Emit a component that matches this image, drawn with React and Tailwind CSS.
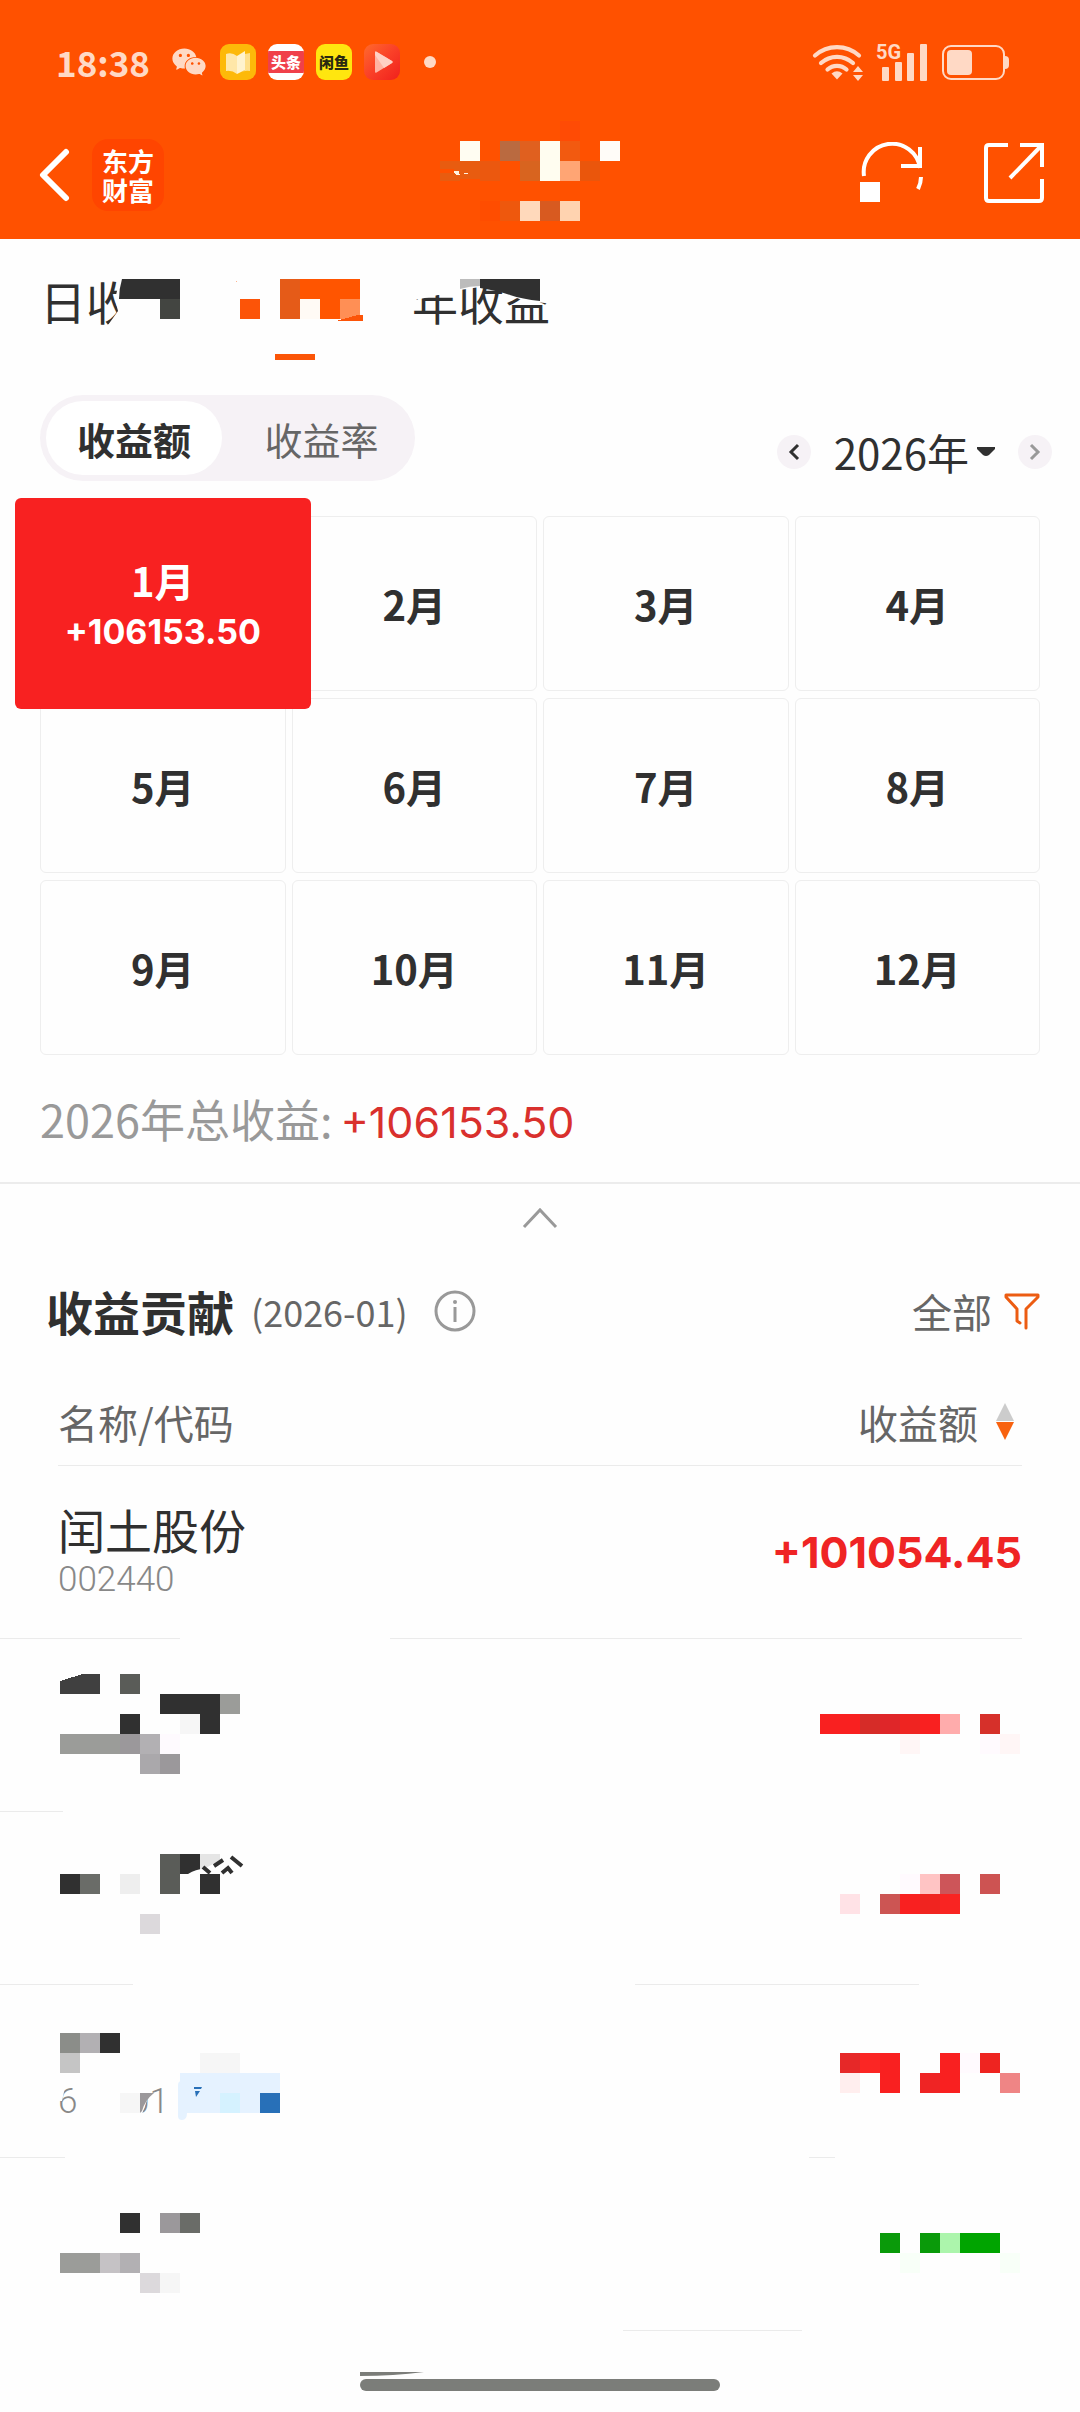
import { useState } from "react";
import { AiFillWechat } from "react-icons/ai";

const MONTHS = [1, 2, 3, 4, 5, 6, 7, 8, 9, 10, 11, 12];
const YEAR_TOTAL = "+106153.50";

/* ---------------- Masked blocks: [x, y, width, height, colour] ---------------- */
const TITLE_BLOCKS = [
  [120, 0, 20, 20, "#ff4b05"],
  [20, 20, 20, 20, "#fffdf2"],
  [60, 20, 20, 20, "#ba6a40"],
  [80, 20, 20, 20, "#e0601f"],
  [100, 20, 20, 40, "#fffdf0"],
  [120, 20, 20, 20, "#f25a10"],
  [160, 20, 20, 20, "#fffcf8"],
  [0, 40, 20, 8, "#e85c10"],
  [0, 52, 20, 8, "#e85c10"],
  [14, 40, 26, 18, "#e85c10"],
  [40, 40, 20, 20, "#eb580f"],
  [80, 40, 20, 20, "#d8641f"],
  [120, 40, 20, 20, "#ffa574"],
  [140, 40, 20, 20, "#ea560c"],
  [40, 80, 20, 20, "#ff4d00"],
  [60, 80, 20, 20, "#ee580d"],
  [80, 80, 20, 20, "#ffd9bb"],
  [100, 80, 20, 20, "#d85a20"],
  [120, 80, 20, 20, "#ffd3b0"],
];

const HOLDINGS = [
  {
    id: "b",
    rule: [[0, 63]],
    name: [
      [62, 35, 20, 20, "#5a5c58"],
      [102, 55, 60, 20, "#303030"],
      [162, 55, 20, 20, "#9b9c99"],
      [62, 75, 20, 20, "#303030"],
      [122, 75, 20, 20, "#f6f6f6"],
      [142, 75, 20, 20, "#303030"],
      [2, 95, 60, 20, "#9b9c99"],
      [62, 95, 20, 20, "#9b989b"],
      [82, 95, 20, 20, "#b2b0b3"],
      [102, 95, 20, 20, "#fefafe"],
      [82, 115, 20, 20, "#aaa8ab"],
      [102, 115, 20, 20, "#9b989b"],
    ],
    amount: [
      [0, 75, 40, 20, "#f92020"],
      [40, 75, 20, 20, "#d62c28"],
      [60, 75, 20, 20, "#df2629"],
      [80, 75, 20, 20, "#ef2421"],
      [100, 75, 20, 20, "#f92020"],
      [120, 75, 20, 20, "#ffacac"],
      [160, 75, 20, 20, "#d6302a"],
      [80, 95, 20, 20, "#fff6f6"],
      [160, 95, 20, 20, "#fffafe"],
      [180, 95, 20, 20, "#fff6f6"],
    ],
  },
  {
    id: "c",
    rule: [[0, 133], [635, 919]],
    name: [
      [2, 62, 20, 20, "#303030"],
      [22, 62, 20, 20, "#6a6c68"],
      [62, 62, 20, 20, "#eeeeee"],
      [102, 42, 20, 40, "#5a5c58"],
      [122, 42, 20, 20, "#303030"],
      [142, 42, 20, 20, "#e5e5e5"],
      [82, 102, 20, 20, "#dcd9dc"],
    ],
    amount: [
      [80, 62, 20, 20, "#fffafe"],
      [100, 62, 20, 20, "#ffc4c4"],
      [120, 62, 20, 20, "#cd5559"],
      [160, 62, 20, 20, "#cd5352"],
      [20, 82, 20, 20, "#ffe2e6"],
      [60, 82, 20, 20, "#cc5553"],
      [80, 82, 20, 20, "#f92020"],
      [100, 82, 20, 20, "#f02420"],
      [120, 82, 20, 20, "#f92422"],
    ],
  },
  {
    id: "d",
    rule: [[0, 65], [809, 835]],
    name: [
      [2, 48, 20, 20, "#8b8d89"],
      [22, 48, 20, 20, "#b2b0b3"],
      [42, 48, 20, 20, "#303030"],
      [2, 68, 20, 20, "#c5c5c5"],
      [142, 68, 40, 20, "#f6f6f6"],
      [122, 88, 100, 40, "#e5f2ff"],
      [162, 108, 20, 20, "#d5f2ff"],
      [202, 108, 20, 20, "#2870b8"],
    ],
    amount: [
      [20, 68, 20, 20, "#e62828"],
      [40, 68, 20, 20, "#fb2624"],
      [60, 68, 20, 40, "#f92020"],
      [120, 68, 20, 40, "#f92020"],
      [140, 68, 20, 20, "#fffafe"],
      [160, 68, 20, 20, "#ee2420"],
      [20, 88, 20, 20, "#ffeeee"],
      [100, 88, 20, 20, "#ef2424"],
      [180, 88, 20, 20, "#ef8585"],
    ],
  },
  {
    id: "e",
    rule: [[623, 802]],
    name: [
      [62, 55, 20, 20, "#303030"],
      [102, 55, 20, 20, "#9b989b"],
      [122, 55, 20, 20, "#6a6c68"],
      [2, 95, 40, 20, "#9b9c99"],
      [42, 95, 20, 20, "#c5c2c5"],
      [62, 95, 20, 20, "#b2b0b3"],
      [82, 115, 20, 20, "#dcd9dc"],
      [102, 115, 20, 20, "#f6f6f6"],
    ],
    amount: [
      [60, 75, 20, 20, "#0a9a0a"],
      [100, 75, 20, 20, "#0a9a0a"],
      [120, 75, 20, 20, "#acf5ac"],
      [140, 75, 40, 20, "#00a400"],
      [80, 95, 20, 20, "#f8fff8"],
      [180, 95, 20, 20, "#f8fff8"],
    ],
  },
];

function Blocks({ blocks, width, height, className, children }) {
  return (
    <svg
      width={width}
      height={height}
      viewBox={`0 0 ${width} ${height}`}
      shapeRendering="crispEdges"
      aria-hidden="true"
      className={className}
    >
      {blocks.map(([x, y, w, h, fill]) => (
        <rect key={`${x}-${y}`} x={x} y={y} width={w} height={h} fill={fill} />
      ))}
      {children}
    </svg>
  );
}

/* Hairline under a table row, made of one or more [from, to] segments out of 1080 */
function RuleRow({ segments }) {
  const parts = [];
  let at = 0;
  segments.forEach(([from, to]) => {
    if (from > at) parts.push({ key: `gap-${at}`, width: from - at, line: false });
    parts.push({ key: `line-${from}`, width: to - from, line: true });
    at = to;
  });

  return (
    <tr aria-hidden="true">
      <td colSpan={2} className="p-0">
        <div className="flex h-px w-full">
          {parts.map((p) => (
            <span
              key={p.key}
              className={p.line ? "h-px bg-[#ebebeb]" : "h-px"}
              style={{ width: `${(p.width / 1080) * 100}%` }}
            />
          ))}
        </div>
      </td>
    </tr>
  );
}

/* ---------------- Status bar ---------------- */
function StatusBar() {
  return (
    <div className="flex h-[82px] items-end justify-between pr-[70px] pl-14 text-[#ffd9c5]">
      <div className="flex h-10 items-center gap-3">
        <span className="mr-2 font-['Noto_Sans_CJK_SC',sans-serif] text-[35px] leading-10 font-bold">
          18:38
        </span>
        <AiFillWechat size={38} />
        <svg width="36" height="36" viewBox="0 0 36 36">
          <rect width="36" height="36" rx="9" fill="#fdb909" />
          <path d="M6 10q6-2 11 2v18q-5-4-11-3z" fill="#ffe7a8" />
          <path d="M17 12l8-5v19l-8 4z" fill="#fff3cf" />
          <path d="M25 10l5-1v18q-7-1-13 3l8-4z" fill="#ffdf8a" />
        </svg>
        <span className="flex h-9 w-9 items-center overflow-hidden rounded-[9px] bg-white">
          <span className="w-full bg-[#f0404a] text-center font-['Noto_Sans_CJK_SC',sans-serif] text-[15px] leading-[22px] font-black text-white">
            头条
          </span>
        </span>
        <span className="flex h-9 w-9 items-center justify-center rounded-[9px] bg-[#ffe60f] font-['Noto_Sans_CJK_SC',sans-serif] text-[15px] leading-5 font-black text-[#2a2a10]">
          闲鱼
        </span>
        <svg width="36" height="36" viewBox="0 0 36 36">
          <defs>
            <linearGradient id="play-bg" x1="0" y1="0" x2="1" y2="1">
              <stop offset="0" stopColor="#ff6a2c" />
              <stop offset="0.5" stopColor="#fa4028" />
              <stop offset="1" stopColor="#f0201c" />
            </linearGradient>
          </defs>
          <rect width="36" height="36" rx="9" fill="url(#play-bg)" />
          <path d="M11 8.500q0-1.500 1.500-.8L28 17q1.500 1 0 2L12.500 28.500Q11 29.200 11 27.500z" fill="#ffb3a3" />
          <path d="M11 8.500q0-1.500 1.500-.8L28 17q1.500 1 0 2l-8 5-9-13z" fill="#ffd0c4" />
        </svg>
        <span className="ml-3 h-3 w-3 rounded-full bg-[#ffd9c5]" />
      </div>

      <div className="flex h-10 items-center gap-3">
        <svg width="52" height="38" viewBox="0 0 52 38" fill="none" stroke="currentColor" strokeWidth="4.200" strokeLinecap="round">
          <path d="M3 12.500a33 33 0 0 1 44 0" />
          <path d="M9 20a24 24 0 0 1 32 0" />
          <path d="M15.500 26.500a14 14 0 0 1 19 0" />
          <path d="M25 36.500l-5.500-6q5.500-4.500 11 0z" fill="currentColor" stroke="none" />
          <path d="M41 29l5-6 5 6zM41 32l5 6 5-6z" fill="currentColor" stroke="none" />
        </svg>
        <svg width="54" height="38" viewBox="0 0 54 38" fill="currentColor" className="overflow-visible">
          <text x="0" y="16" className="font-[Roboto,sans-serif] text-[20px] font-bold">
            5G
          </text>
          <rect x="6" y="24" width="7" height="14" rx="1" />
          <rect x="19" y="19" width="7" height="19" rx="1" />
          <rect x="31" y="10" width="7" height="28" rx="1" />
          <rect x="44" y="1" width="7" height="37" rx="1" />
        </svg>
        <svg width="68" height="36" viewBox="0 0 68 36" fill="currentColor">
          <rect x="1" y="2" width="61" height="33" rx="8" fill="none" stroke="currentColor" strokeWidth="2" />
          <rect x="5" y="6" width="25" height="25" rx="4" />
          <path d="M63 12q4 0 4 4v5q0 4-4 4z" />
        </svg>
      </div>
    </div>
  );
}

/* ---------------- Title bar ---------------- */
function TitleBar() {
  return (
    <div className="grid h-[157px] grid-cols-[1fr_200px_1fr] items-center px-9 pt-5 text-white">
      <div className="flex items-center gap-[22px] pt-2">
        <button type="button" aria-label="返回">
          <svg width="34" height="56" viewBox="0 0 34 56" fill="none" stroke="currentColor" strokeWidth="6" strokeLinecap="round" strokeLinejoin="round">
            <path d="M30 5L7 28l23 23" />
          </svg>
        </button>
        <a
          href="#home"
          className="flex h-[72px] w-[72px] items-center justify-center rounded-2xl bg-[#ff4500] text-center font-['Noto_Sans_CJK_SC',sans-serif] text-[26px] leading-[29px] font-bold"
        >
          东方
          <br />
          财富
        </a>
      </div>

      <Blocks blocks={TITLE_BLOCKS} width={200} height={100}>
        <path d="M14 51l4-1 1 3h-3zM24 52h4" fill="#fff3e0" stroke="#fff3e0" />
      </Blocks>

      <div className="flex items-center justify-end gap-[58px] pt-1">
        <button type="button" aria-label="刷新">
          <svg width="66" height="62" viewBox="0 0 66 62" fill="none" stroke="currentColor" strokeWidth="4">
            <path d="M4 34a28 28 0 0 1 56-8" />
            <path d="M60 5v19H41" />
            <path d="M61 35q0 6-3 12" />
            <rect y="40" width="20" height="20" fill="#fff" stroke="none" />
          </svg>
        </button>
        <button type="button" aria-label="分享">
          <svg width="60" height="62" viewBox="0 0 60 62" fill="none" stroke="currentColor" strokeWidth="4">
            <path d="M24 3H5q-3 0-3 3v50q0 3 3 3h50q3 0 3-3V37" />
            <path d="M36 3h22v22" />
            <path d="M58 3L26 36" />
          </svg>
        </button>
      </div>
    </div>
  );
}

/* ---------------- Day / month / year tabs ---------------- */
function PeriodTabs() {
  return (
    <nav className="flex gap-12 px-10 pt-10 text-[46px] leading-[42px] text-[#303030]">
      <button type="button" className="relative flex h-[46px] w-[138px] items-start">
        日收
        <svg width="140" height="46" viewBox="0 0 140 46" className="absolute top-0 left-0" aria-hidden="true">
          <path d="M80 0h60v46H68l10-14-3-12z" fill="#fefefe" />
          <path d="M82 0h58v20H79q0-10 3-20z" fill="#303030" />
          <rect x="120" y="20" width="20" height="20" fill="#434541" />
        </svg>
      </button>

      <button type="button" aria-label="月收益" className="flex w-[138px] flex-col items-center">
        <svg width="138" height="46" viewBox="0 0 138 46" shapeRendering="crispEdges">
          <rect x="14" y="20" width="20" height="20" fill="#fc5408" />
          <rect x="54" y="0" width="20" height="40" fill="#e55b18" />
          <rect x="74" y="0" width="60" height="20" fill="#ff5500" />
          <rect x="74" y="20" width="20" height="20" fill="#fffaf5" />
          <rect x="94" y="20" width="20" height="20" fill="#ff5500" />
          <rect x="114" y="20" width="20" height="20" fill="#ff8f55" />
          <path d="M110 42l22-6h5v6z" fill="#fc5408" />
          <path d="M8 2h3v1z" fill="#ffb590" />
        </svg>
        <span className="mt-[29px] h-[6px] w-10 bg-[#fb5508]" />
      </button>

      <button type="button" className="relative flex h-[46px] w-[138px] items-start whitespace-nowrap">
        年收益
        <svg width="140" height="46" viewBox="0 0 140 46" className="absolute top-0 left-0" aria-hidden="true">
          <path d="M0 0h46v16H26L8 20H0z" fill="#fefefe" />
          <path d="M46 0h94v25l-30-4-22-9-20-4-20 3z" fill="#fefefe" />
          <path d="M48 0h20v7q-10 0-20 3z" fill="#bcbcbc" />
          <path d="M68 0h60v22q-18-2-30-6t-30-7z" fill="#303030" />
        </svg>
      </button>
    </nav>
  );
}

export default function App() {
  const [mode, setMode] = useState("amount");
  const [month, setMonth] = useState(1);
  const [open, setOpen] = useState(true);

  return (
    <div className="flex min-h-screen w-full flex-col bg-[#fefefe] font-['Noto_Sans_CJK_SC',sans-serif] text-[#303030]">
      <header className="bg-[#ff5100]">
        <StatusBar />
        <TitleBar />
      </header>

      <main>
        <PeriodTabs />

        {/* -------- Amount / rate switch and year picker -------- */}
        <div className="mt-[35px] flex items-end justify-between pr-7 pl-10">
          <div className="flex h-[86px] w-[375px] rounded-full bg-[#f6f2f6] p-[6px] text-[38px]">
            <button
              type="button"
              onClick={() => setMode("amount")}
              className={
                mode === "amount"
                  ? "w-44 rounded-full bg-white font-bold"
                  : "w-44 rounded-full text-[#666]"
              }
            >
              收益额
            </button>
            <button
              type="button"
              onClick={() => setMode("rate")}
              className={
                mode === "rate"
                  ? "flex-1 rounded-full bg-white font-bold"
                  : "flex-1 rounded-full pl-3 text-[#666]"
              }
            >
              收益率
            </button>
          </div>

          <div className="flex items-center pb-3">
            <button type="button" aria-label="上一年" className="flex h-[34px] w-[34px] items-center justify-center rounded-full bg-[#f6f2f6]">
              <svg width="12" height="18" viewBox="0 0 12 18" fill="none" stroke="#303030" strokeWidth="3">
                <path d="M10 2L3 9l7 7" />
              </svg>
            </button>
            <button type="button" className="flex h-[34px] items-center gap-2 px-[23px] text-[42px] leading-[38px]">
              2026年
              <svg width="18" height="10" viewBox="0 0 18 10" fill="#303030">
                <path d="M0 0h18v2l-6 6q-3 2-6 0L0 2z" />
              </svg>
            </button>
            <button type="button" aria-label="下一年" className="flex h-[34px] w-[34px] items-center justify-center rounded-full bg-[#f6f2f6]">
              <svg width="12" height="18" viewBox="0 0 12 18" fill="none" stroke="#999" strokeWidth="3">
                <path d="M2 2l7 7-7 7" />
              </svg>
            </button>
          </div>
        </div>

        {/* -------- Months -------- */}
        <div className="mt-[35px] grid grid-cols-4 gap-x-[6px] gap-y-[7px] px-10 text-[40px] leading-[52px] font-bold">
          {MONTHS.map((m) =>
            m === month ? (
              <button
                key={m}
                type="button"
                className="relative z-10 -mx-[25px] -my-[18px] flex h-[211px] flex-col items-center justify-center rounded-md bg-[#f82121] pt-1 text-white"
              >
                {m}月
                <span className="font-[Inter,sans-serif] text-[34px] leading-[52px]">{YEAR_TOTAL}</span>
              </button>
            ) : (
              <button
                key={m}
                type="button"
                onClick={() => setMonth(m)}
                className="h-[175px] rounded-md border border-[#eee]"
              >
                {m}月
              </button>
            )
          )}
        </div>

        <p className="border-b-2 border-[#ececec] px-10 text-[45px] leading-[127px]">
          <span className="mr-2 text-[#999]">2026年总收益:</span>
          <span className="font-[Inter,sans-serif] text-[43px] leading-none text-[#d9302d]">
            {YEAR_TOTAL}
          </span>
        </p>

        <button
          type="button"
          aria-label="收起"
          onClick={() => setOpen(!open)}
          className="flex h-[68px] w-full items-center justify-center"
        >
          <svg width="36" height="22" viewBox="0 0 36 22" fill="none" stroke="#999" strokeWidth="3">
            <path d="M2 20L18 3l16 17" />
          </svg>
        </button>

        {/* -------- Contribution -------- */}
        <div className="flex h-[118px] items-center justify-between pr-10 pl-[46px]">
          <div className="flex items-center">
            <h2 className="text-[47px] font-bold">收益贡献</h2>
            <span className="ml-[17px] text-[36px] text-[#666]">(2026-01)</span>
            <button type="button" aria-label="说明" className="ml-[26px]">
              <svg width="42" height="42" viewBox="0 0 42 42" fill="none" stroke="#999" strokeWidth="3">
                <circle cx="21" cy="21" r="19" />
                <path d="M21 17v15" />
                <circle cx="21" cy="12" r="2" fill="#999" stroke="none" />
              </svg>
            </button>
          </div>
          <button type="button" className="flex items-center gap-3 text-[40px] text-[#666]">
            全部
            <svg width="36" height="38" viewBox="0 0 36 38" fill="none" stroke="#ec5c12" strokeWidth="3" strokeLinecap="round" strokeLinejoin="round">
              <path d="M16 31l-3-2V17L2 5V3h32v2L22 17v19" />
            </svg>
          </button>
        </div>

        <table className="w-full border-collapse">
          <thead>
            <tr className="h-[95px] text-[40px] leading-[60px] text-[#666]">
              <th className="pt-2 pl-[58px] text-left font-normal">名称/代码</th>
              <th className="pt-2 pr-[66px] font-normal">
                <button type="button" className="ml-auto flex items-center gap-[18px]">
                  收益额
                  <svg width="18" height="37" viewBox="0 0 18 37">
                    <path d="M9 0l9 18H0z" fill="#ccc" />
                    <path d="M9 37l9-18H0z" fill="#f8620f" />
                  </svg>
                </button>
              </th>
            </tr>
          </thead>
          <tbody>
            <RuleRow segments={[[58, 1022]]} />
            <tr className="h-[172px]">
              <td className="pl-[58px]">
                <div className="text-[47px] leading-[56px]">闰土股份</div>
                <div className="font-[Roboto,sans-serif] text-[35px] leading-[46px] font-light text-[#888]">
                  002440
                </div>
              </td>
              <td className="pr-[58px] text-right font-[Inter,sans-serif] text-[43px] font-bold text-[#ef2424]">
                +101054.45
              </td>
            </tr>
            <RuleRow segments={[[0, 180], [390, 1022]]} />

            {HOLDINGS.flatMap((h) => [
              <tr key={h.id} className="h-[172px]">
                <td className="py-0 pl-[58px]">
                  <Blocks blocks={h.name} width={240} height={172} className="block">
                    {h.id === "b" && <path d="M2 42l23-7h17v20H2z" fill="#404040" />}
                    {h.id === "c" && (
                      <g shapeRendering="auto">
                        <path d="M130 62q8-5 16-5l16-9v14z" fill="#fefefe" />
                        <rect x="142" y="62" width="20" height="20" fill="#303030" />
                        <path
                          d="M145 55l7 6M156 54l9-6M164 61l6-5 4 5M173 45l11 9"
                          fill="none"
                          stroke="#303030"
                          strokeWidth="4"
                        />
                      </g>
                    )}
                    {h.id === "d" && (
                      <g shapeRendering="auto">
                        <path d="M120 100q0-4 4-4v32h5q0 7-5 7-4 0-4-4z" fill="#e5f2ff" />
                        <path d="M136 102h8l-1 2h-7zM137 106h5l-4 6z" fill="#2870b8" />
                        <g fill="#888" className="font-[Roboto,sans-serif] text-[35px] font-light">
                          <text x="0" y="128">
                            6
                          </text>
                          <text x="72" y="128">
                            01
                          </text>
                        </g>
                        <path d="M0 98h8l-4 18H0z" fill="#fefefe" />
                        <path d="M68 98h24v9l-8 22H68z" fill="#fefefe" />
                        <rect x="62" y="108" width="20" height="20" fill="#f6f6f6" />
                        <path d="M82 108h14q-9 7-12 18l-2 2z" fill="#9b989b" />
                      </g>
                    )}
                  </Blocks>
                </td>
                <td className="py-0 pr-[60px]">
                  <Blocks blocks={h.amount} width={200} height={172} className="ml-auto block" />
                </td>
              </tr>,
              <RuleRow key={`${h.id}-rule`} segments={h.rule} />,
            ])}
          </tbody>
        </table>
      </main>

      {/* -------- Home indicator -------- */}
      <footer className="mt-auto flex justify-center pb-5">
        <svg width="360" height="20" viewBox="0 0 360 20" fill="#7b7d79" aria-hidden="true">
          <path d="M0 0h64q-30 4-64 4z" />
          <rect y="7" width="360" height="12" rx="6" />
        </svg>
      </footer>
    </div>
  );
}
